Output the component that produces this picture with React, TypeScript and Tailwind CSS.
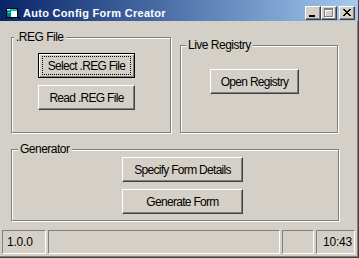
import React from "react";

function CaptionButton({ kind, className }: { kind: "min" | "max" | "close"; className?: string }) {
  return (
    <div
      className={`w-[16px] h-[14px] border border-t-white border-l-white border-r-[#404040] border-b-[#404040] bg-[#d4d0c8] shadow-[inset_-1px_-1px_0_#808080] ${className ?? ""}`}
    >
      <svg width="14" height="12" viewBox="0 0 14 12" shapeRendering="crispEdges" className="block">
        {kind === "min" && <rect x="3" y="8" width="6" height="2" fill="#000" />}
        {kind === "max" && (
          <g>
            <g fill="#ffffff" transform="translate(1,1)">
              <rect x="2" y="1" width="9" height="2" />
              <rect x="2" y="3" width="1" height="7" />
              <rect x="10" y="3" width="1" height="7" />
              <rect x="2" y="9" width="9" height="1" />
            </g>
            <g fill="#808080">
              <rect x="2" y="1" width="9" height="2" />
              <rect x="2" y="3" width="1" height="7" />
              <rect x="10" y="3" width="1" height="7" />
              <rect x="2" y="9" width="9" height="1" />
            </g>
          </g>
        )}
        {kind === "close" && (
          <g fill="#000">
            <rect x="3" y="2" width="2" height="1" />
            <rect x="9" y="2" width="2" height="1" />
            <rect x="4" y="3" width="2" height="1" />
            <rect x="8" y="3" width="2" height="1" />
            <rect x="5" y="4" width="4" height="1" />
            <rect x="6" y="5" width="2" height="1" />
            <rect x="5" y="6" width="4" height="1" />
            <rect x="4" y="7" width="2" height="1" />
            <rect x="8" y="7" width="2" height="1" />
            <rect x="3" y="8" width="2" height="1" />
            <rect x="9" y="8" width="2" height="1" />
          </g>
        )}
      </svg>
    </div>
  );
}

function AppIcon() {
  return (
    <svg width="16" height="16" viewBox="0 0 16 16" shapeRendering="crispEdges" className="block">
      <rect x="2" y="3" width="12" height="10" fill="#000" />
      <rect x="3" y="4" width="10" height="2" fill="#00c0c0" />
      <rect x="3" y="4" width="3" height="1" fill="#ffffff" />
      <rect x="3" y="6" width="10" height="6" fill="#ffffff" />
      <rect x="3" y="6" width="4" height="6" fill="#008080" />
      <rect x="4" y="7" width="2" height="1" fill="#00ffff" />
      <rect x="14" y="12" width="2" height="1" fill="#000" />
      <rect x="15" y="13" width="1" height="1" fill="#000" />
    </svg>
  );
}

function WinButton({
  label,
  isDefault,
  className,
}: {
  label: string;
  isDefault?: boolean;
  className: string;
}) {
  if (isDefault) {
    return (
      <button
        type="button"
        className={`relative flex items-center justify-center border border-black bg-[#d4d0c8] shadow-[inset_1px_1px_0_#ffffff,inset_-1px_-1px_0_#808080] text-[12px] tracking-[-0.7px] leading-[14px] ${className}`}
      >
        <span className="absolute left-[3px] right-[3px] top-[2px] bottom-[2px] border border-dotted border-black" />
        <span className="relative">{label}</span>
      </button>
    );
  }
  return (
    <button
      type="button"
      className={`flex items-center justify-center border border-t-white border-l-white border-r-[#404040] border-b-[#404040] bg-[#d4d0c8] shadow-[inset_-1px_-1px_0_#808080] text-[12px] tracking-[-0.7px] leading-[14px] ${className}`}
    >
      {label}
    </button>
  );
}

function Group({
  label,
  labelPos,
  className,
  children,
}: {
  label: string;
  labelPos: string;
  className: string;
  children: React.ReactNode;
}) {
  return (
    <div
      className={`relative shrink-0 border border-[#808080] shadow-[inset_1px_1px_0_#ffffff,1px_1px_0_#ffffff] ${className}`}
    >
      <span className={`absolute top-[-7px] bg-[#d4d0c8] px-[2px] text-[12px] leading-[13px] tracking-[-0.5px] ${labelPos}`}>
        {label}
      </span>
      {children}
    </div>
  );
}

export default function App() {
  return (
    <div className="w-[359px] h-[258px] flex flex-col bg-[#d4d0c8] border-r border-b border-r-[#404040] border-b-[#404040] shadow-[inset_-1px_-1px_0_#808080] overflow-hidden font-['Liberation_Sans',Arial,sans-serif] text-[11px] text-black">
      {/* Title bar */}
      <div className="h-[21px] shrink-0 flex items-center pt-[4px] bg-linear-to-r from-[#0a246a] to-[#a6caf0]">
        <div className="ml-[4px]">
          <AppIcon />
        </div>
        <span className="ml-[3px] text-white font-bold text-[11px] tracking-[0.3px] leading-[14px]">
          Auto Config Form Creator
        </span>
        <div className="ml-auto mr-[3px] flex items-center">
          <CaptionButton kind="min" />
          <CaptionButton kind="max" />
          <CaptionButton kind="close" className="ml-[2px]" />
        </div>
      </div>

      {/* Row 1 */}
      <div className="flex items-start mt-[16px]">
        <Group label=".REG File" labelPos="left-[2px]" className="ml-[11px] w-[160px] h-[96px]">
          <div className="flex flex-col gap-[7px] pl-[26px] pt-[15px]">
            <WinButton label="Select .REG File" isDefault className="w-[97px] h-[25px]" />
            <WinButton label="Read .REG File" className="w-[97px] h-[25px]" />
          </div>
        </Group>
        <Group label="Live Registry" labelPos="left-[5px]" className="ml-[9px] mt-[8px] w-[158px] h-[88px]">
          <div className="flex pl-[29px] pt-[23px]">
            <WinButton label="Open Registry" className="w-[89px] h-[25px]" />
          </div>
        </Group>
      </div>

      {/* Generator */}
      <Group label="Generator" labelPos="left-[6px]" className="ml-[11px] mt-[16px] w-[328px] h-[72px]">
        <div className="flex flex-col gap-[7px] pl-[110px] pt-[7px]">
          <WinButton label="Specify Form Details" className="w-[121px] h-[25px]" />
          <WinButton label="Generate Form" className="w-[121px] h-[25px]" />
        </div>
      </Group>

      {/* Status bar */}
      <div className="mt-[9px] ml-[2px] flex gap-[2px] h-[24px] text-[12px] tracking-[-0.2px]">
        <div className="w-[44px] flex items-center pl-[4px] border border-t-[#808080] border-l-[#808080] border-r-white border-b-white">
          1.0.0
        </div>
        <div className="w-[232px] border border-t-[#808080] border-l-[#808080] border-r-white border-b-white" />
        <div className="w-[32px] border border-t-[#808080] border-l-[#808080] border-r-white border-b-white" />
        <div className="w-[39px] flex items-center justify-end pr-[2px] border border-t-[#808080] border-l-[#808080] border-r-white border-b-white">
          10:43
        </div>
      </div>
    </div>
  );
}
